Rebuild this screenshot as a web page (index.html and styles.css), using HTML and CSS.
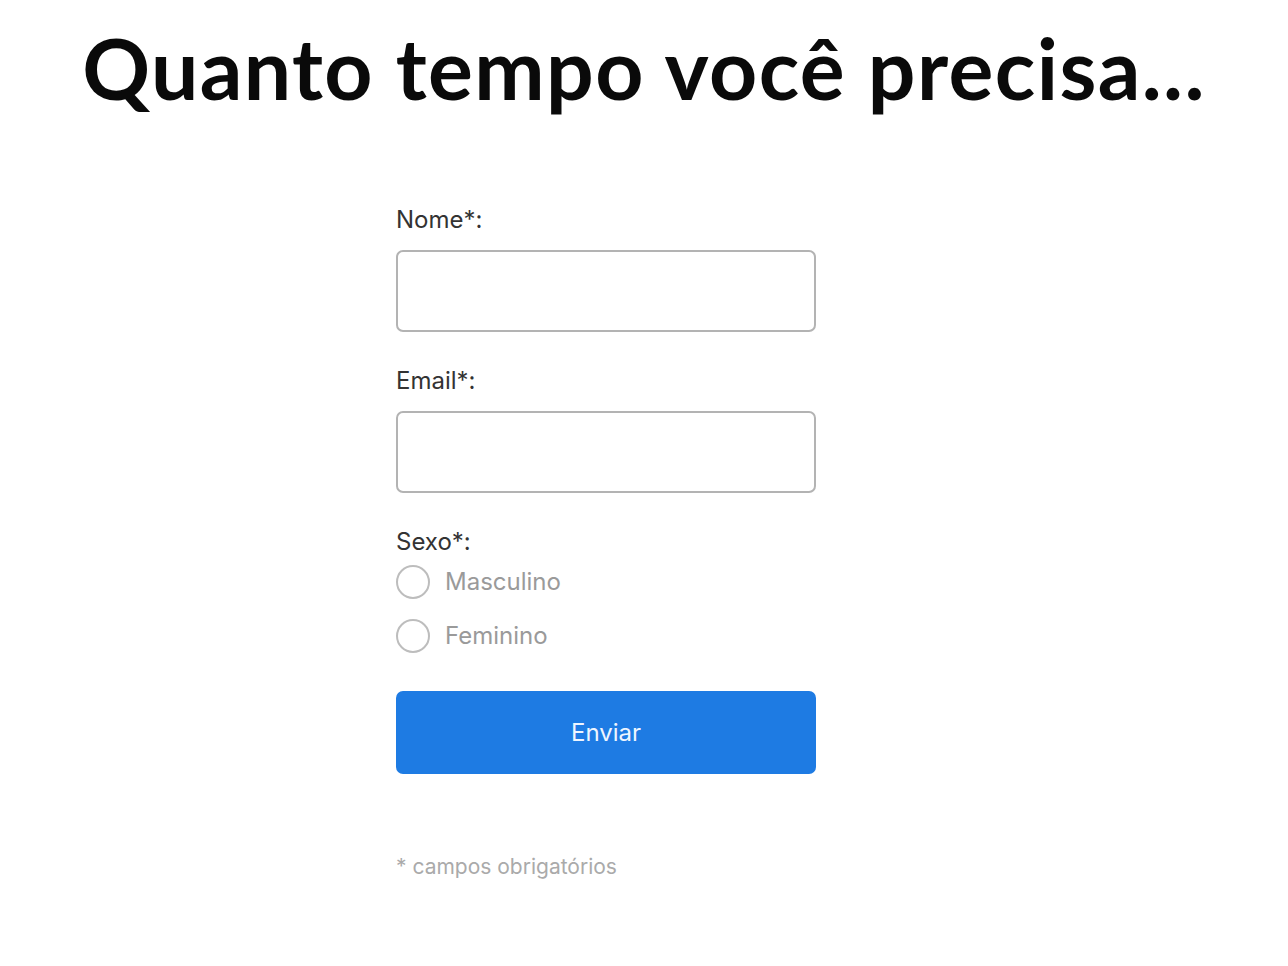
FILE: index.html
```html
<!DOCTYPE html>
<html lang="pt-BR">
<head>
    <meta charset="UTF-8">
    <meta name="viewport" content="width=device-width, initial-scale=1.0">
    <title>Quanto tempo você precisa...</title>
    <link rel="stylesheet" href="styles.css">
</head>
<body>
    <h1 class="title">Quanto tempo você precisa...</h1>

    <form class="signup" id="signupForm">
        <div class="field">
            <label for="nome">Nome*:</label>
            <input type="text" id="nome" name="nome" required>
        </div>

        <div class="field">
            <label for="email">Email*:</label>
            <input type="email" id="email" name="email" required>
        </div>

        <div class="field field-radios">
            <span class="field-label">Sexo*:</span>
            <label class="radio"><input type="radio" name="sexo" value="m"><span class="dot"></span>Masculino</label>
            <label class="radio"><input type="radio" name="sexo" value="f"><span class="dot"></span>Feminino</label>
        </div>

        <button type="submit" class="send">Enviar</button>

        <p class="note">* campos obrigatórios</p>
    </form>
</body>
</html>
```

FILE: styles.css
```css
body {
    margin: 0;
    padding: 0;
    background-color: #fff;
    font-family: Inter, "Liberation Sans", sans-serif;
    color: #333;
}

.title {
    font-family: Lato, "Open Sans", sans-serif;
    font-weight: 700;
    font-size: 84px;
    letter-spacing: 1.4px;
    line-height: 1;
    color: #0a0a0a;
    text-align: center;
    margin: 0;
    padding-top: 26px;
}

.signup {
    width: 420px;
    margin: 96px 0 0 396px;
}

.field {
    display: flex;
    flex-direction: column;
    margin-bottom: 35px;
}

.field label,
.field-label {
    font-size: 24px;
    line-height: 28px;
    color: #333;
    margin-bottom: 16px;
}

input[type="text"],
input[type="email"] {
    width: 100%;
    height: 82px;
    border: 2px solid #b3b3b3;
    border-radius: 7px;
    box-sizing: border-box;
    padding: 0 14px;
    font-size: 22px;
    font-family: inherit;
}

.field-radios {
    margin-bottom: 28px;
}

.field-radios .field-label {
    margin-bottom: -1px;
}

.field .radio {
    display: flex;
    align-items: center;
    gap: 15px;
    height: 54px;
    margin: 0;
    font-size: 24px;
    color: #9a9a9a;
    cursor: pointer;
}

.radio input {
    display: none;
}

.radio .dot {
    width: 30px;
    height: 30px;
    border: 2px solid #bdbdbd;
    border-radius: 50%;
}

.radio input:checked + .dot {
    border-color: #1e7be3;
    box-shadow: inset 0 0 0 6px #fff;
    background-color: #1e7be3;
}

.send {
    display: block;
    width: 100%;
    height: 83px;
    border: none;
    border-radius: 7px;
    background-color: #1e7be3;
    color: #eef5ff;
    font-family: inherit;
    font-size: 24px;
    cursor: pointer;
}

.send:hover {
    background-color: #1a6fd0;
}

.note {
    margin: 80px 0 0;
    font-size: 21px;
    color: #aaa;
}
```
